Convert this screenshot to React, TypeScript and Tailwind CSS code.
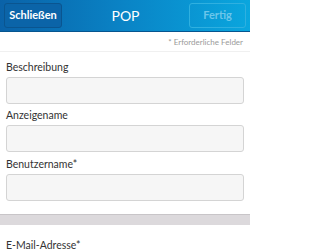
import React from "react";

function Field({ label, top }: { label: string; top: string }) {
  return (
    <div className="flex flex-col">
      <div className={`${top} flex items-end pb-[5px] pl-[6px] text-[10.5px] leading-none text-[#333333]`}>{label}</div>
      <div className="mx-[6px] h-[27px] rounded-[3px] border border-[#d4d4d4] bg-[#f6f6f6]" />
    </div>
  );
}

export default function App() {
  return (
    <div className="w-[250px] h-[250px] overflow-hidden bg-white" style={{ fontFamily: "Lato, 'Open Sans', sans-serif" }}>
      <div className="h-[32px] flex items-center justify-between px-[4px] bg-gradient-to-r from-[#0a62a8] via-[#0a84c6] to-[#0aa6de] border-b border-[#06558f]">
        <div className="h-[25px] w-[58px] flex items-center justify-center rounded-[3px] border border-[#0a5590] bg-[#0b64a8] text-white text-[11px] font-bold">
          Schließen
        </div>
        <div className="text-white text-[14px] leading-none">POP</div>
        <div className="h-[25px] w-[57px] flex items-center justify-center rounded-[3px] border border-[#2fb0e0] text-[#6cc6ea] text-[11px] font-bold">
          Fertig
        </div>
      </div>
      <div className="h-[20px] flex items-center justify-end pr-[7px] text-[8px] text-[#9a9a9a] border-b border-[#f0f0f0]">
        * Erforderliche Felder
      </div>
      <div className="flex flex-col">
        <Field label="Beschreibung" top="h-[25px]" />
        <Field label="Anzeigename" top="h-[21px]" />
        <Field label="Benutzername*" top="h-[22px]" />
      </div>
      <div className="mt-[13px] h-[11px] bg-[#dcd9dc] border-t border-[#c8c5c8]" />
      <div className="h-[25px] flex items-end pb-[0px] pl-[6px] text-[10.5px] leading-none text-[#333333]">E-Mail-Adresse*</div>
    </div>
  );
}
